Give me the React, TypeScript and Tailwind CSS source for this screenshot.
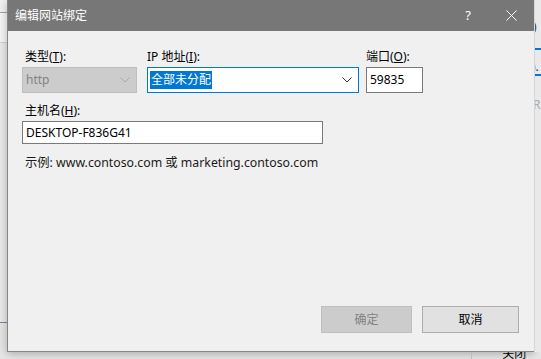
export default function App() {
  const font = { fontFamily: '"Noto Sans", "Noto Sans CJK SC", sans-serif' }

  return (
    <div className="w-[541px] h-[359px] overflow-hidden bg-[#f0f0f0] text-[12px] text-black" style={font}>
      <div className="flex h-[352px]">
        {/* left strip of window behind */}
        <div className="w-[7px] flex flex-col">
          <div className="h-[12px] bg-[#f0f0f0]" />
          <div className="h-px bg-[#a0a0a0]" />
          <div className="h-[29px] bg-[#f3f3f3]" />
          <div className="h-px bg-[#d0d0d0]" />
          <div className="h-[279px] bg-[#e8e8e8]" />
          <div className="h-px bg-[#8080a0]" />
          <div className="flex-1 bg-[#e4e4e4]" />
        </div>

        {/* dialog */}
        <div className="w-[527px] flex flex-col border-l border-b border-[#858585] shadow-[0_2px_8px_rgba(0,0,0,0.25)]">
          <div className="h-[31px] bg-[#777777] flex items-center text-white">
            <span className="pl-[7px] text-[12px] flex-1">编辑网站绑定</span>
            <span className="w-[20px] text-center text-[13px] mr-[28px]">?</span>
            <svg className="w-[11px] h-[11px] mr-[17px]" viewBox="0 0 11 11">
              <path d="M0.5 0.5L10.5 10.5M10.5 0.5L0.5 10.5" stroke="white" strokeWidth="1" />
            </svg>
          </div>

          <div className="flex-1 bg-[#f0f0f0] pl-[14px] pt-[18px] flex flex-col">
            <div className="flex">
              <div className="w-[115px] flex flex-col">
                <span className="pl-[3px] h-[18px] leading-[16px]">类型(<u>T</u>):</span>
                <div className="h-[26px] bg-[#cccccc] border border-[#bfbfbf] flex items-center pl-[3px] pr-[6px] text-[#838383]">
                  <span className="flex-1">http</span>
                  <svg className="w-[10px] h-[6px]" viewBox="0 0 10 6">
                    <path d="M0.5 0.5L5 5L9.5 0.5" fill="none" stroke="#a8a8a8" strokeWidth="1" />
                  </svg>
                </div>
              </div>
              <div className="w-[212px] ml-[10px] flex flex-col">
                <span className="h-[18px] leading-[16px]">IP 地址(<u>I</u>):</span>
                <div className="h-[26px] bg-white border border-[#0078d7] flex items-center pl-[2px] pr-[6px]">
                  <span className="flex-1">
                    <span className="bg-[#0078d7] text-white px-px leading-[18px] inline-block">全部未分配</span>
                  </span>
                  <svg className="w-[10px] h-[6px]" viewBox="0 0 10 6">
                    <path d="M0.5 0.5L5 5L9.5 0.5" fill="none" stroke="#333333" strokeWidth="1" />
                  </svg>
                </div>
              </div>
              <div className="w-[57px] ml-[7px] flex flex-col">
                <span className="h-[18px] leading-[16px]">端口(<u>O</u>):</span>
                <div className="h-[26px] bg-white border border-[#7a7a7a] flex items-center pl-[3px]">
                  59835
                </div>
              </div>
            </div>

            <span className="pl-[3px] mt-[10px] h-[18px] leading-[16px]">主机名(<u>H</u>):</span>
            <div className="w-[301px] h-[23px] bg-white border border-[#7a7a7a] flex items-center pl-[3px]">
              DESKTOP-F836G41
            </div>

            <span className="pl-[3px] mt-[10px] text-[12.3px] text-[#1a1a1a]">示例: www.contoso.com 或 marketing.contoso.com</span>

            <div className="flex-1" />
            <div className="flex justify-end pr-[15px] pb-[18px] gap-[10px]">
              <div className="w-[91px] h-[27px] bg-[#cccccc] border border-[#bfbfbf] flex items-center justify-center text-[#838383]">
                确定
              </div>
              <div className="w-[97px] h-[27px] bg-[#e1e1e1] border border-[#adadad] flex items-center justify-center">
                取消
              </div>
            </div>
          </div>
        </div>

        {/* right strip of window behind */}
        <div className="w-[7px] flex flex-col bg-[#e9e9e9] border-l border-[#d6d6d6] text-[12px] leading-[14px] overflow-hidden">
          <div className="h-[20px]" />
          <span className="text-[#333] -ml-[2px]">)</span>
          <div className="h-[14px]" />
          <div className="h-[2px] bg-[#0078d7]" />
          <div className="h-[10px]" />
          <span className="text-[#333] -ml-[3px]">).</span>
          <div className="h-[2px] bg-[#0078d7]" />
          <div className="h-[22px]" />
          <span className="text-[#aaa] -ml-[2px]">R</span>
        </div>
      </div>

      {/* bottom strip */}
      <div className="h-[7px] flex bg-[#e6e6e6] overflow-hidden">
        <div className="w-[474px] border-r border-[#bdbdbd]" />
        <span className="ml-[30px] text-[12px] leading-[12px] -mt-[4px]">关闭(C)</span>
      </div>
    </div>
  )
}
